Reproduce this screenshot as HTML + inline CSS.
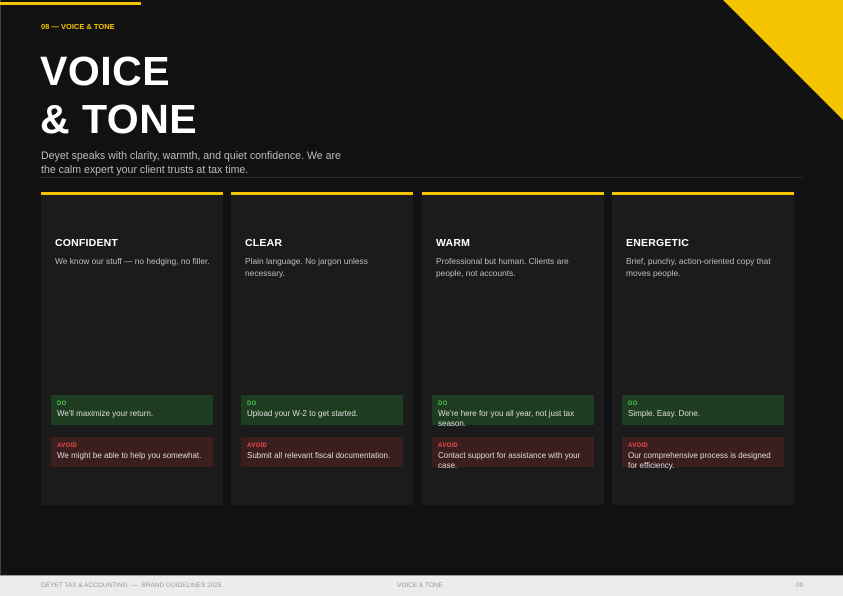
<!DOCTYPE html><html><head><style>
*{margin:0;padding:0;box-sizing:border-box}
body{width:843px;height:596px;background:#111;position:relative;overflow:hidden;font-family:"Liberation Sans",sans-serif;color:#fff}
.abs{position:absolute}
.card{position:absolute;top:192px;width:182px;height:313px;background:#1b1b1b;border-top:3px solid #f5c400}
.card h3{position:absolute;left:14px;top:42px;font-size:10.5px;font-weight:bold;letter-spacing:.2px}
.card p{position:absolute;left:14px;top:60px;width:160px;font-size:8.4px;line-height:12px;color:#bdbdbd}
.box{position:absolute;left:10px;width:162px;height:30px;padding:6px 6px}
.box b{display:block;font-size:6px;letter-spacing:.3px;margin-bottom:2px}
.box span{display:block;font-size:8px;line-height:10px;color:#ddd}
.do{top:200px;background:#1e3d20}.do b{color:#4cbf4f}
.av{top:242px;background:#3b1e1e}.av b{color:#ef4b4b}
</style></head><body>
<div class="abs" style="left:0;top:0;width:1px;height:575px;background:#444"></div>
<div class="abs" style="left:0;top:2px;width:141px;height:3px;background:#f5c400"></div>
<svg class="abs" style="left:723px;top:0" width="120" height="120"><polygon points="0,0 120,0 120,120" fill="#f5c400"/></svg>
<div class="abs" style="left:41px;top:22px;font-size:7.5px;font-weight:bold;color:#f5c400">08 — VOICE &amp; TONE</div>
<div class="abs" style="left:40px;top:47px;font-size:41px;line-height:48px;font-weight:bold;letter-spacing:.5px">VOICE<br>&amp; TONE</div>
<div class="abs" style="left:41px;top:149px;font-size:10.6px;line-height:14px;color:#bbb">Deyet speaks with clarity, warmth, and quiet confidence. We are<br>the calm expert your client trusts at tax time.</div>
<div class="abs" style="left:41px;top:177px;width:762px;height:1px;background:#2c2c2c"></div>

<div class="card" style="left:41px"><h3>CONFIDENT</h3><p>We know our stuff — no hedging, no filler.</p>
<div class="box do"><b>DO</b><span>We'll maximize your return.</span></div>
<div class="box av"><b>AVOID</b><span>We might be able to help you somewhat.</span></div></div>
<div class="card" style="left:231px"><h3>CLEAR</h3><p>Plain language. No jargon unless necessary.</p>
<div class="box do"><b>DO</b><span>Upload your W-2 to get started.</span></div>
<div class="box av"><b>AVOID</b><span>Submit all relevant fiscal documentation.</span></div></div>
<div class="card" style="left:422px"><h3>WARM</h3><p>Professional but human. Clients are people, not accounts.</p>
<div class="box do"><b>DO</b><span>We're here for you all year, not just tax season.</span></div>
<div class="box av"><b>AVOID</b><span>Contact support for assistance with your case.</span></div></div>
<div class="card" style="left:612px"><h3>ENERGETIC</h3><p>Brief, punchy, action-oriented copy that moves people.</p>
<div class="box do"><b>DO</b><span>Simple. Easy. Done.</span></div>
<div class="box av"><b>AVOID</b><span>Our comprehensive process is designed for efficiency.</span></div></div>

<div class="abs" style="left:0;top:575px;width:843px;height:21px;background:#ececec;border-top:1px solid #999;font-size:6.5px;color:#999">
<span class="abs" style="left:41px;top:6px">DEYET TAX &amp; ACCOUNTING &nbsp;—&nbsp; BRAND GUIDELINES 2025</span>
<span class="abs" style="left:397px;top:6px">VOICE &amp; TONE</span>
<span class="abs" style="left:796px;top:6px">09</span></div>
</body></html>
